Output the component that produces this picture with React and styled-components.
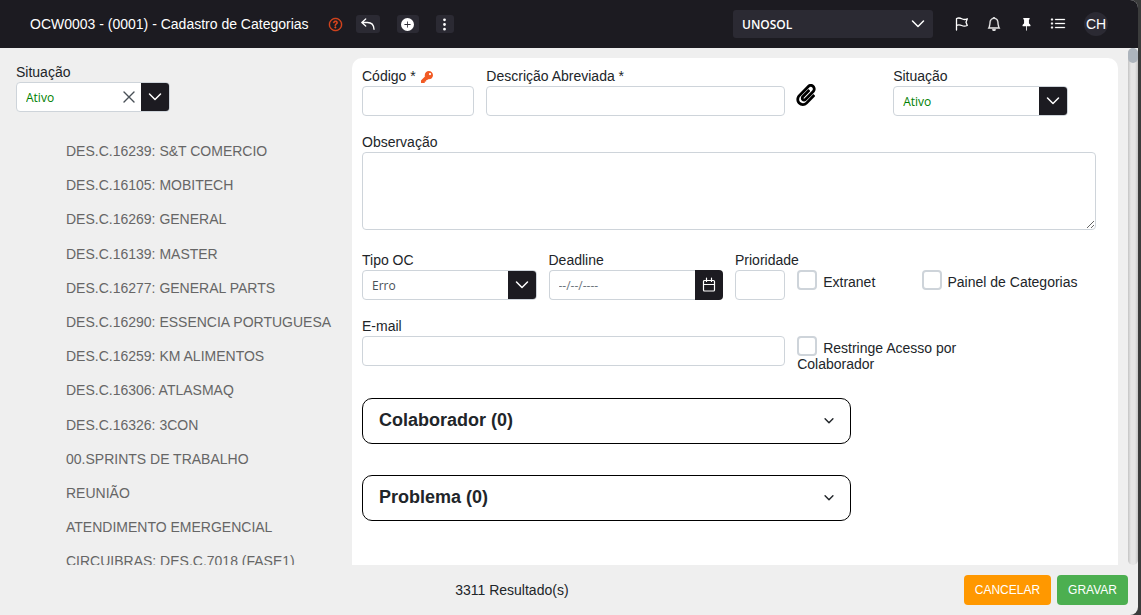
import React from "react";
import styled, { createGlobalStyle } from "styled-components";
import {
  BsBell,
  BsListUl,
  BsPinFill,
  BsPlusCircleFill,
  BsQuestionCircle,
  BsThreeDotsVertical,
} from "react-icons/bs";
import { FaKey, FaPaperclip } from "react-icons/fa";

const Colors = {
  dark: "#1c1b21",
  darkSoft: "#2b2a33",
  frame: "#3b3c3c",
  bg: "#efefef",
  white: "#ffffff",
  text: "#212529",
  muted: "#666666",
  border: "#ced4da",
  green: "#008000",
  orange: "#f15a24",
};

const categories = [
  "DES.C.16239: S&T COMERCIO",
  "DES.C.16105: MOBITECH",
  "DES.C.16269: GENERAL",
  "DES.C.16139: MASTER",
  "DES.C.16277: GENERAL PARTS",
  "DES.C.16290: ESSENCIA PORTUGUESA",
  "DES.C.16259: KM ALIMENTOS",
  "DES.C.16306: ATLASMAQ",
  "DES.C.16326: 3CON",
  "00.SPRINTS DE TRABALHO",
  "REUNIÃO",
  "ATENDIMENTO EMERGENCIAL",
  "CIRCUIBRAS: DES.C.7018 (FASE1)",
];

const Chevron = ({ size = 14, weight = 1.5 }) => (
  <svg width={size} height={size} viewBox="0 0 14 14" fill="none" aria-hidden="true">
    <path
      d="M1.500 4 7 9.500 12.500 4"
      stroke="currentColor"
      strokeWidth={weight}
      strokeLinecap="round"
      strokeLinejoin="round"
    />
  </svg>
);

const BackArrow = () => (
  <svg width="14" height="14" viewBox="0 0 14 14" fill="none" aria-hidden="true">
    <path
      d="M4.700 2 .8 5.500l3.900 3.500M1 5.500h5.500c4.200 0 6.300 2.400 6.500 6.800"
      stroke="currentColor"
      strokeWidth="1.300"
      strokeLinecap="round"
      strokeLinejoin="round"
    />
  </svg>
);

const Flag = () => (
  <svg width="14" height="14" viewBox="0 0 14 14" fill="none" aria-hidden="true">
    <path
      d="M1.500 13V1.500c2-.8 3.600-.6 5.200.3s3.400 1 5.600 0l-1.300 3.400 1.300 3.300c-2.200.9-4 .8-5.600 0s-3.200-1-5.200-.2"
      stroke="currentColor"
      strokeWidth="1.300"
      strokeLinecap="round"
      strokeLinejoin="round"
    />
  </svg>
);

const Cross = () => (
  <svg width="12" height="12" viewBox="0 0 12 12" aria-hidden="true">
    <path
      d="m1 1 10 10M11 1 1 11"
      stroke="currentColor"
      strokeWidth="1.400"
      strokeLinecap="round"
    />
  </svg>
);

const CalendarIcon = () => (
  <svg width="14" height="16" viewBox="0 0 14 16" fill="none" aria-hidden="true">
    <path
      d="M2.500 3.500h9a1 1 0 0 1 1 1v8.500a1 1 0 0 1-1 1h-9a1 1 0 0 1-1-1V4.500a1 1 0 0 1 1-1ZM1.500 7.500h11M4.500 1.200v3.300M9.500 1.200v3.300"
      stroke="currentColor"
      strokeWidth="1.200"
      strokeLinecap="round"
    />
  </svg>
);

const SelectField = ({ id, label, value, clearable, color }) => (
  <Field>
    <Label htmlFor={id}>{label}</Label>
    <SelectBox>
      <Select id={id} defaultValue={value} $color={color}>
        <option>{value}</option>
      </Select>
      {clearable && (
        <ClearButton type="button" aria-label="Limpar">
          <Cross />
        </ClearButton>
      )}
      <Caret>
        <Chevron />
      </Caret>
    </SelectBox>
  </Field>
);

export default function App() {
  return (
    <React.Fragment>
      <GlobalStyle />
      <Window>
        <Header>
          <Title>OCW0003 - (0001) - Cadastro de Categorias</Title>
          <HelpLink href="#" aria-label="Ajuda">
            <BsQuestionCircle size={13} stroke="currentColor" strokeWidth={0.6} />
          </HelpLink>
          <Actions>
            <ActionButton type="button" aria-label="Voltar" $width={24}>
              <BackArrow />
            </ActionButton>
            <ActionButton type="button" aria-label="Novo" $width={22}>
              <BsPlusCircleFill size={13} />
            </ActionButton>
            <ActionButton type="button" aria-label="Mais" $width={18}>
              <BsThreeDotsVertical size={15} />
            </ActionButton>
          </Actions>
          <Company>
            <CompanySelect aria-label="Empresa" defaultValue="UNOSOL">
              <option>UNOSOL</option>
            </CompanySelect>
            <CompanyCaret>
              <Chevron />
            </CompanyCaret>
          </Company>
          <Tools>
            <ToolButton type="button" aria-label="Marcar">
              <Flag />
            </ToolButton>
            <ToolButton type="button" aria-label="Notificações">
              <BsBell size={14} stroke="currentColor" strokeWidth={0.4} />
            </ToolButton>
            <ToolButton type="button" aria-label="Fixar">
              <BsPinFill size={13} />
            </ToolButton>
            <ToolButton type="button" aria-label="Lista">
              <BsListUl size={16} stroke="currentColor" strokeWidth={0.3} />
            </ToolButton>
          </Tools>
          <Avatar type="button">CH</Avatar>
        </Header>

        <Body>
          <Sidebar>
            <FilterBox>
              <SelectField
                id="filtro"
                label="Situação"
                value="Ativo"
                color={Colors.green}
                clearable
              />
            </FilterBox>
            <CategoryList>
              {categories.map((name) => (
                <li key={name}>
                  <CategoryLink href="#">{name}</CategoryLink>
                </li>
              ))}
            </CategoryList>
          </Sidebar>

          <Panel>
            <Grid>
              <Field $span={2}>
                <Label htmlFor="codigo">
                  Código * <KeyIcon size={12} />
                </Label>
                <Input id="codigo" />
              </Field>
              <Field $span={5}>
                <Label htmlFor="descricao">Descrição Abreviada *</Label>
                <Input id="descricao" />
              </Field>
              <StatusGroup>
                <AttachButton type="button" aria-label="Anexar">
                  <FaPaperclip size={22} />
                </AttachButton>
                <SelectField
                  id="situacao"
                  label="Situação"
                  value="Ativo"
                  color={Colors.green}
                />
              </StatusGroup>

              <Field $span={12}>
                <Label htmlFor="observacao">Observação</Label>
                <TextArea id="observacao" />
              </Field>

              <Cell $span={3}>
                <SelectField id="tipo" label="Tipo OC" value="Erro" />
              </Cell>
              <Field $span={3}>
                <Label htmlFor="deadline">Deadline</Label>
                <DateBox>
                  <DateInput id="deadline" placeholder="--/--/----" />
                  <DateButton type="button" aria-label="Abrir calendário">
                    <CalendarIcon />
                  </DateButton>
                </DateBox>
              </Field>
              <Field $span={1}>
                <Label htmlFor="prioridade">Prioridade</Label>
                <Input id="prioridade" />
              </Field>
              <CheckLabel $span={2}>
                <Checkbox type="checkbox" />
                Extranet
              </CheckLabel>
              <CheckLabel $span={3}>
                <Checkbox type="checkbox" />
                Painel de Categorias
              </CheckLabel>

              <Field $span={7}>
                <Label htmlFor="email">E-mail</Label>
                <Input id="email" type="email" />
              </Field>
              <CheckLabel $span={3}>
                <Checkbox type="checkbox" />
                Restringe Acesso por Colaborador
              </CheckLabel>
            </Grid>

            <Accordions>
              <Accordion type="button" aria-expanded="false">
                Colaborador (0)
                <Chevron size={10} weight={2} />
              </Accordion>
              <Accordion type="button" aria-expanded="false">
                Problema (0)
                <Chevron size={10} weight={2} />
              </Accordion>
            </Accordions>
          </Panel>

          <ScrollTrack>
            <ScrollThumb />
          </ScrollTrack>
        </Body>

        <Footer>
          <Results>3311 Resultado(s)</Results>
          <FooterButtons>
            <FooterButton type="button" $bg="#ff9800">
              CANCELAR
            </FooterButton>
            <FooterButton type="button" $bg="#4caf50">
              GRAVAR
            </FooterButton>
          </FooterButtons>
        </Footer>
      </Window>
    </React.Fragment>
  );
}

const GlobalStyle = createGlobalStyle`
  *, *::before, *::after {
    box-sizing: border-box;
  }
  body {
    margin: 0;
    background: ${Colors.frame};
    color: ${Colors.text};
    font-family: "Liberation Sans", Arial, sans-serif;
    font-size: 14px;
  }
  button, input, select, textarea {
    font-family: inherit;
    margin: 0;
  }
  button {
    border: 0;
    padding: 0;
    cursor: pointer;
  }
`;

const Window = styled.div`
  display: flex;
  flex-direction: column;
  height: 100vh;
  margin-right: 3px;
  background: ${Colors.bg};
  border-radius: 0 8px 8px 0;
  overflow: hidden;
`;

const Header = styled.header`
  display: flex;
  align-items: center;
  flex: 0 0 48px;
  padding: 0 30px;
  background: ${Colors.dark};
  color: ${Colors.white};
`;

const Title = styled.h1`
  margin: 0;
  font-size: 14px;
  font-weight: 400;
  white-space: nowrap;
`;

const HelpLink = styled.a`
  display: flex;
  margin: 0 14px 0 20px;
  color: #e8481c;

  svg {
    overflow: visible;
  }
`;

const Actions = styled.div`
  display: flex;
  gap: 17px;
`;

const ActionButton = styled.button`
  display: flex;
  align-items: center;
  justify-content: center;
  width: ${({ $width }) => $width}px;
  height: 18px;
  border-radius: 3px;
  background: ${Colors.darkSoft};
  color: ${Colors.white};
`;

const Company = styled.div`
  position: relative;
  width: 200px;
  margin-left: auto;
`;

const CompanySelect = styled.select`
  display: block;
  width: 100%;
  height: 28px;
  padding: 0 9px;
  appearance: none;
  border: 0;
  border-radius: 3px;
  background: ${Colors.darkSoft};
  color: ${Colors.white};
  font-family: "Open Sans", sans-serif;
  font-size: 12px;
  font-weight: 600;
`;

const CompanyCaret = styled.span`
  position: absolute;
  top: 0;
  right: 8px;
  height: 100%;
  display: flex;
  align-items: center;
  pointer-events: none;
`;

const Tools = styled.div`
  display: flex;
  gap: 12px;
  margin: 0 16px 0 19px;
`;

const ToolButton = styled.button`
  display: flex;
  align-items: center;
  justify-content: center;
  width: 20px;
  height: 20px;
  background: none;
  color: ${Colors.white};
`;

const Avatar = styled.button`
  width: 24px;
  height: 24px;
  border-radius: 50%;
  background: ${Colors.darkSoft};
  color: ${Colors.white};
  font-size: 14px;
`;

const Body = styled.div`
  display: flex;
  flex: 1;
  min-height: 0;
`;

const Sidebar = styled.aside`
  flex: 0 0 352px;
  padding: 16px 16px 0;
  overflow: hidden;
`;

const FilterBox = styled.div`
  width: 154px;
`;

const CategoryList = styled.ul`
  list-style: none;
  margin: 22px 0 0;
  padding: 0 0 0 50px;
`;

const CategoryLink = styled.a`
  display: block;
  padding: 8px 0;
  color: ${Colors.muted};
  line-height: 1.3;
  text-decoration: none;
  white-space: nowrap;

  &:hover {
    color: ${Colors.text};
  }
`;

const Panel = styled.main`
  flex: 1;
  min-width: 0;
  margin: 10px 10px 0 0;
  padding: 10px 22px 0 10px;
  background: ${Colors.white};
  border-radius: 10px 10px 0 0;
  overflow: hidden;
`;

const Grid = styled.div`
  display: grid;
  grid-template-columns: repeat(12, minmax(0, 1fr));
  gap: 18px 12px;
`;

const Cell = styled.div`
  grid-column: span ${({ $span }) => $span};
`;

const Field = styled.div`
  display: flex;
  flex-direction: column;
  grid-column: ${({ $span }) => ($span ? `span ${$span}` : "auto")};
`;

const Label = styled.label`
  height: 18px;
  line-height: 17px;
  white-space: nowrap;
`;

const KeyIcon = styled(FaKey)`
  margin-left: 1px;
  vertical-align: -2px;
  color: ${Colors.orange};
`;

const Input = styled.input`
  width: 100%;
  height: 30px;
  padding: 0 9px;
  border: 1px solid ${Colors.border};
  border-radius: 4px;
  background: ${Colors.white};
  font-size: 12px;
`;

const TextArea = styled.textarea`
  display: block;
  width: 100%;
  height: 78px;
  margin-bottom: 4px;
  padding: 6px 9px;
  border: 1px solid ${Colors.border};
  border-radius: 4px;
  resize: vertical;
`;

const SelectBox = styled.div`
  position: relative;
  height: 30px;
  border: 1px solid ${Colors.border};
  border-radius: 4px;
  background: ${Colors.white};
  overflow: hidden;
`;

const Select = styled.select`
  display: block;
  width: 100%;
  height: 100%;
  padding: 0 36px 0 9px;
  appearance: none;
  border: 0;
  background: none;
  color: ${({ $color }) => $color || "#495057"};
  font-family: "Open Sans", sans-serif;
  font-size: 12px;
`;

const ClearButton = styled.button`
  position: absolute;
  top: 0;
  right: 34px;
  display: flex;
  align-items: center;
  height: 100%;
  background: none;
  color: #495057;
`;

const Caret = styled.span`
  position: absolute;
  top: 0;
  right: 0;
  display: flex;
  align-items: center;
  justify-content: center;
  width: 28px;
  height: 100%;
  background: ${Colors.dark};
  color: ${Colors.white};
  pointer-events: none;
`;

const StatusGroup = styled.div`
  grid-column: span 5;
  display: grid;
  grid-template-columns: 96px 175px;
`;

const AttachButton = styled.button`
  display: flex;
  align-items: center;
  justify-content: center;
  justify-self: start;
  width: 18px;
  padding-top: 6px;
  background: none;
  color: #000;

  svg {
    flex-shrink: 0;
  }
`;

const DateBox = styled.div`
  display: flex;
  height: 30px;
`;

const DateInput = styled(Input)`
  flex: 1;
  min-width: 0;
  border-right: 0;
  border-radius: 4px 0 0 4px;
  font-family: "Open Sans", sans-serif;

  &::placeholder {
    color: #6c757d;
  }
`;

const DateButton = styled.button`
  display: flex;
  align-items: center;
  justify-content: center;
  width: 28px;
  border-radius: 0 4px 4px 0;
  background: ${Colors.dark};
  color: ${Colors.white};
`;

const CheckLabel = styled.label`
  grid-column: span ${({ $span }) => $span};
  padding-top: 18px;
  line-height: 16px;
`;

const Checkbox = styled.input`
  width: 20px;
  height: 20px;
  margin: 0 6px 0 0;
  appearance: none;
  border: 2px solid ${Colors.border};
  border-radius: 4px;
  background: ${Colors.white};
  vertical-align: -3px;

  &:checked {
    background: ${Colors.dark};
  }
`;

const Accordions = styled.div`
  display: grid;
  gap: 31px;
  width: calc(100% * 2 / 3);
  margin-top: 26px;
`;

const Accordion = styled.button`
  display: flex;
  align-items: center;
  justify-content: space-between;
  height: 46px;
  padding: 0 16px 2px;
  border: 1px solid #000;
  border-radius: 10px;
  background: ${Colors.white};
  color: ${Colors.text};
  font-size: 18px;
  font-weight: 700;

  svg {
    margin-top: 2px;
  }
`;

const ScrollTrack = styled.div`
  flex: 0 0 10px;
  border-radius: 5px;
  background: linear-gradient(to right, #c4c4c4, #e6e6e6 30%, #e6e6e6 70%, #c4c4c4);
`;

const ScrollThumb = styled.div`
  height: 15px;
  border-radius: 5px;
  background: #adb5bd;
`;

const Footer = styled.footer`
  display: grid;
  grid-template-columns: 40% 1fr auto;
  align-items: center;
  flex: 0 0 50px;
  padding-right: 10px;
`;

const Results = styled.span`
  grid-column: 2;
  padding-left: 4px;
`;

const FooterButtons = styled.div`
  display: flex;
  gap: 6px;
`;

const FooterButton = styled.button`
  height: 30px;
  padding: 0 11px;
  border-radius: 4px;
  background: ${({ $bg }) => $bg};
  color: ${Colors.white};
  font-size: 12px;
`;
